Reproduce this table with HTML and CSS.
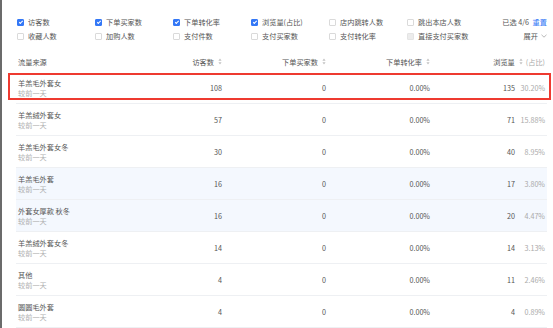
FILE: index.html
```html
<!DOCTYPE html>
<html lang="zh-CN">
<head>
    <meta charset="UTF-8">
    <title>流量来源</title>
    <link rel="stylesheet" href="styles.css">
</head>
<body>
    <div class="page">
        <div class="edge"></div>
        <div class="main">
            <div class="filters">
                <div class="opts">
                    <label class="opt"><span class="box on"></span>访客数</label>
                    <label class="opt"><span class="box on"></span>下单买家数</label>
                    <label class="opt"><span class="box on"></span>下单转化率</label>
                    <label class="opt"><span class="box on"></span>浏览量(占比)</label>
                    <label class="opt"><span class="box"></span>店内跳转人数</label>
                    <label class="opt"><span class="box"></span>跳出本店人数</label>
                    <label class="opt"><span class="box"></span>收藏人数</label>
                    <label class="opt"><span class="box"></span>加购人数</label>
                    <label class="opt"><span class="box"></span>支付件数</label>
                    <label class="opt"><span class="box"></span>支付买家数</label>
                    <label class="opt"><span class="box"></span>支付转化率</label>
                    <label class="opt"><span class="box off"></span>直接支付买家数</label>
                </div>
                <div class="side">
                    <div>已选 4/6 <span class="reset">重置</span></div>
                    <div class="expand">展开
                        <svg width="6" height="4" viewBox="0 0 6 4"><path d="M0.5 0.8 L3 3.2 L5.5 0.8" fill="none" stroke="#999" stroke-width="0.7"/></svg>
                    </div>
                </div>
            </div>

            <div class="table">
                <div class="row head">
                    <div class="name">流量来源</div>
                    <div class="num">访客数 <span class="sort"><svg width="4" height="7" viewBox="0 0 4 7"><path d="M2 0.5 L3.6 2.7 L0.4 2.7 Z M2 6.5 L3.6 4.3 L0.4 4.3 Z" fill="#c4c4c4"/></svg></span></div>
                    <div class="num">下单买家数 <span class="sort"><svg width="4" height="7" viewBox="0 0 4 7"><path d="M2 0.5 L3.6 2.7 L0.4 2.7 Z M2 6.5 L3.6 4.3 L0.4 4.3 Z" fill="#c4c4c4"/></svg></span></div>
                    <div class="num">下单转化率 <span class="sort"><svg width="4" height="7" viewBox="0 0 4 7"><path d="M2 0.5 L3.6 2.7 L0.4 2.7 Z M2 6.5 L3.6 4.3 L0.4 4.3 Z" fill="#c4c4c4"/></svg></span></div>
                    <div class="num wide">浏览量 <span class="sort"><svg width="4" height="7" viewBox="0 0 4 7"><path d="M2 0.5 L3.6 2.7 L0.4 2.7 Z M2 6.5 L3.6 4.3 L0.4 4.3 Z" fill="#c4c4c4"/></svg></span><span class="pct">(占比)</span></div>
                </div>
                <div class="row marked">
                    <div class="name">羊羔毛外套女<span class="sub">较前一天</span></div>
                    <div class="num">108</div><div class="num">0</div><div class="num">0.00%</div>
                    <div class="num">135</div><div class="num pct">30.20%</div>
                    <div class="outline"></div>
                </div>
                <div class="row">
                    <div class="name">羊羔绒外套女<span class="sub">较前一天</span></div>
                    <div class="num">57</div><div class="num">0</div><div class="num">0.00%</div>
                    <div class="num">71</div><div class="num pct">15.88%</div>
                </div>
                <div class="row">
                    <div class="name">羊羔毛外套女冬<span class="sub">较前一天</span></div>
                    <div class="num">30</div><div class="num">0</div><div class="num">0.00%</div>
                    <div class="num">40</div><div class="num pct">8.95%</div>
                </div>
                <div class="row tint">
                    <div class="name">羊羔毛外套<span class="sub">较前一天</span></div>
                    <div class="num">16</div><div class="num">0</div><div class="num">0.00%</div>
                    <div class="num">17</div><div class="num pct">3.80%</div>
                </div>
                <div class="row tint">
                    <div class="name">外套女厚款 秋冬<span class="sub">较前一天</span></div>
                    <div class="num">16</div><div class="num">0</div><div class="num">0.00%</div>
                    <div class="num">20</div><div class="num pct">4.47%</div>
                </div>
                <div class="row">
                    <div class="name">羊羔绒外套女冬<span class="sub">较前一天</span></div>
                    <div class="num">14</div><div class="num">0</div><div class="num">0.00%</div>
                    <div class="num">14</div><div class="num pct">3.13%</div>
                </div>
                <div class="row">
                    <div class="name">其他<span class="sub">较前一天</span></div>
                    <div class="num">4</div><div class="num">0</div><div class="num">0.00%</div>
                    <div class="num">11</div><div class="num pct">2.46%</div>
                </div>
                <div class="row">
                    <div class="name">圆圆毛外套<span class="sub">较前一天</span></div>
                    <div class="num">4</div><div class="num">0</div><div class="num">0.00%</div>
                    <div class="num">4</div><div class="num pct">0.89%</div>
                </div>
            </div>
        </div>
    </div>
</body>
</html>
```

FILE: styles.css
```css
body {
    margin: 0;
    font-family: "Noto Sans CJK SC", "Noto Sans", sans-serif;
    font-size: 7.2px;
    color: #555;
    background: #fff;
    overflow: hidden;
}

.page {
    display: flex;
    height: 328px;
}

.edge {
    width: 2px;
    background: #6b6b6b;
}

.main {
    flex: 1;
    padding: 15px 6px 0 14px;
}

/* metric checkboxes */
.filters {
    display: flex;
    padding-left: 1px;
}

.opts {
    display: grid;
    grid-template-columns: repeat(6, 78px);
    grid-auto-rows: 14px;
}

.opt {
    display: flex;
    align-items: center;
    gap: 4px;
    line-height: 14px;
}

.box {
    width: 5px;
    height: 5px;
    border: 0.8px solid #dadada;
    border-radius: 1px;
    background: #fff;
    position: relative;
}

.box.on {
    background: #3478f6;
    border-color: #3478f6;
}

.box.on:after {
    content: "";
    position: absolute;
    left: 1.6px;
    top: 0.2px;
    width: 1.4px;
    height: 2.8px;
    border: solid #fff;
    border-width: 0 0.9px 0.9px 0;
    transform: rotate(45deg);
}

.box.off {
    background: #ececec;
    border-color: #e4e4e4;
}

.side {
    margin-left: auto;
    display: flex;
    flex-direction: column;
    align-items: flex-end;
    line-height: 14px;
}

.reset {
    color: #3478f6;
    margin-left: 2px;
}

.expand {
    display: flex;
    align-items: center;
    gap: 3px;
}

/* table */
.table {
    margin-top: 8px;
}

.row {
    display: grid;
    grid-template-columns: 112px 92px 104px 104px 85px 30px;
    padding: 0 2px;
    height: 31px;
    border-bottom: 1px solid #eef0f3;
    align-items: center;
    position: relative;
}

.row.head {
    height: 21px;
    border-bottom: none;
}

.row.tint {
    background: #f4f8fe;
}

.name {
    line-height: 10px;
    display: flex;
    flex-direction: column;
}

.sub {
    color: #b0b0b0;
}

.num {
    text-align: right;
    display: flex;
    justify-content: flex-end;
    align-items: center;
}

.num.wide {
    grid-column: span 2;
}

.sort {
    display: flex;
    margin-left: 4px;
}

.pct {
    color: #aaa;
}

.head .pct {
    margin-left: 3px;
}

.outline {
    position: absolute;
    left: -8px;
    right: -4px;
    top: 1px;
    height: 23px;
    border: 2px solid #ee3a30;
}
```
